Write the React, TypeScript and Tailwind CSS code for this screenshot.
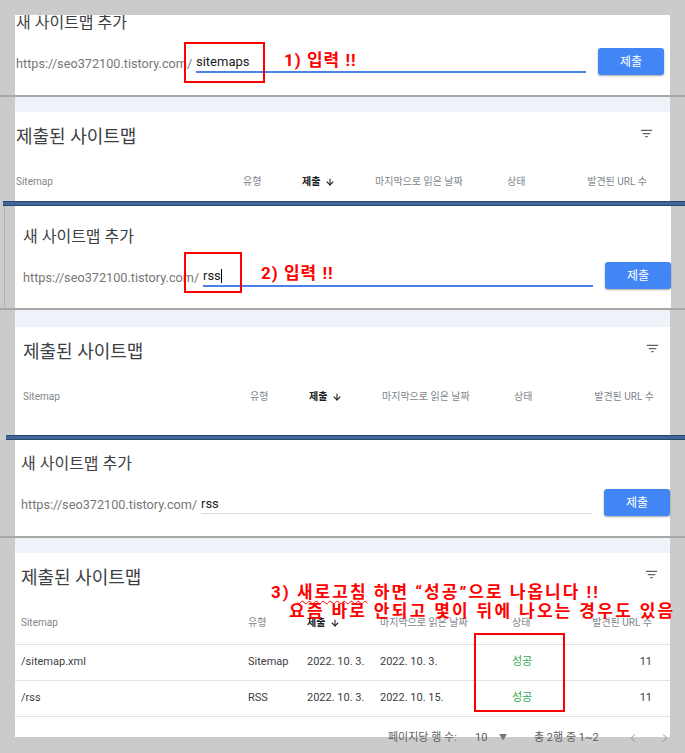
import { ArrowDown, ChevronLeft, ChevronRight } from 'lucide-react';

const PREFIX = 'https://seo372100.tistory.com/';

const rows = [
  { path: '/sitemap.xml', type: 'Sitemap', submitted: '2022. 10. 3.', read: '2022. 10. 3.', status: '성공', count: 11 },
  { path: '/rss', type: 'RSS', submitted: '2022. 10. 3.', read: '2022. 10. 15.', status: '성공', count: 11 },
];

function FilterIcon() {
  return (
    <svg width="15" height="15" viewBox="0 0 24 24" fill="#5f6368">
      <path d="M10 18h4v-2h-4v2zM3 6v2h18V6H3zm3 7h12v-2H6v2z" />
    </svg>
  );
}

function InputRow({ value, focused, caret }: { value: string; focused?: boolean; caret?: boolean }) {
  return (
    <div className="mt-[13px] flex h-[27px] items-center">
      <div className="flex h-[22px] flex-1 items-end">
        <span className="w-[180px] shrink-0 pb-[1px] text-[12.7px] leading-4 text-[#777]">{PREFIX}</span>
        <div
          className={`flex h-[22px] flex-1 items-end pb-[1px] ${
            focused ? 'border-b-2 border-[#4a80e8]' : 'border-b border-[#dadce0]'
          }`}
        >
          <span className="text-[13px] leading-4 text-[#202124]">{value}</span>
          {caret && <span className="mb-[1px] h-[14px] w-px bg-black" />}
        </div>
      </div>
      <button className="ml-[12px] h-[27px] w-[66px] rounded-[3px] bg-[#4285f4] text-[12px] text-white shadow-[0_1px_2px_rgba(0,0,0,0.35)]">
        제출
      </button>
    </div>
  );
}

function Gap({ h }: { h: string }) {
  return (
    <div className={`flex flex-col ${h}`}>
      <div className="h-[2px] bg-[#a8a8a8]" />
      <div className="ml-[15px] w-[655px] flex-1 bg-[#eef2f9]" />
    </div>
  );
}

function HeaderCells() {
  return (
    <>
      <div>Sitemap</div>
      <div>유형</div>
      <div className="flex items-center gap-[5px] font-bold text-[#202124]">
        제출 <ArrowDown size={10} strokeWidth={2.6} />
      </div>
      <div>마지막으로 읽은 날짜</div>
      <div>상태</div>
      <div className="text-right">발견된 URL 수</div>
    </>
  );
}

const gridCols = 'grid w-[631px] grid-cols-[227px_59px_73px_132px_1fr_auto] items-center';

function CardTitle({ mr }: { mr: string }) {
  return (
    <div className={`flex items-start justify-between pt-[12px] ${mr}`}>
      <div className="text-[18px] leading-[26px] text-[#3c4043]">제출된 사이트맵</div>
      <div className="mt-[2px]">
        <FilterIcon />
      </div>
    </div>
  );
}

function App() {
  return (
    <div className="relative h-[753px] w-[685px] overflow-hidden bg-[#cbcbcb] font-[Roboto,'Noto_Sans_CJK_KR',sans-serif]">
      <div className="h-[15px]" />

      {/* 1 */}
      <div className="ml-[15px] h-[80px] w-[655px] overflow-hidden bg-white pr-[6px] pl-[1px]">
        <div className="-mt-1 text-[16px] leading-6 text-[#3c4043]">새 사이트맵 추가</div>
        <InputRow value="sitemaps" focused />
      </div>
      <Gap h="h-[17px]" />
      <div className="ml-[15px] h-[89px] w-[655px] bg-white pl-[1px]">
        <CardTitle mr="mr-[16px]" />
        <div className={`${gridCols} mt-[25px] text-[10px] leading-[14px] text-[#80868b]`}>
          <HeaderCells />
        </div>
      </div>

      <div className="ml-[3px] h-[5px] border-y border-[#28466f] bg-[#41669a]" />

      {/* 2 */}
      <div className="flex h-[102px]">
        <div className="ml-[4px] w-[11px] border-l border-[#b3b3b3]" />
        <div className="w-[656px] bg-white pt-[19px] pl-[8px]">
          <div className="text-[16px] leading-6 text-[#3c4043]">새 사이트맵 추가</div>
          <InputRow value="rss" focused caret />
        </div>
      </div>
      <Gap h="h-[19px]" />
      <div className="ml-[15px] h-[108px] w-[655px] bg-white pl-[8px]">
        <CardTitle mr="mr-[10px]" />
        <div className={`${gridCols} mt-[25px] text-[10px] leading-[14px] text-[#80868b]`}>
          <HeaderCells />
        </div>
      </div>

      <div className="ml-[6px] h-[5px] border-y border-[#28466f] bg-[#41669a]" />

      {/* 3 */}
      <div className="ml-[15px] h-[96px] w-[655px] bg-white pt-[12px] pl-[6px]">
        <div className="text-[16px] leading-6 text-[#3c4043]">새 사이트맵 추가</div>
        <InputRow value="rss" />
      </div>
      <Gap h="h-[17px]" />
      <div className="ml-[15px] h-[184px] w-[655px] bg-white">
        <div className="pl-[6px]">
          <CardTitle mr="mr-[11px]" />
        </div>
        <div className="mt-[25px] border-b border-[#e3e3e3] pb-[14px] pl-[6px]">
          <div className={`${gridCols} text-[10px] leading-[14px] text-[#80868b]`}>
            <HeaderCells />
          </div>
        </div>
        {rows.map((r) => (
          <div key={r.path} className="flex h-[36px] items-center border-b border-[#e3e3e3] pl-[6px]">
            <div className={`${gridCols} text-[11px] text-[#3c4043]`}>
              <div>{r.path}</div>
              <div>{r.type}</div>
              <div>{r.submitted}</div>
              <div>{r.read}</div>
              <div className="text-[#34a853]">{r.status}</div>
              <div className="text-right">{r.count}</div>
            </div>
          </div>
        ))}
      </div>

      <div className="-mt-[7px] flex h-[16px] items-center text-[11px] text-[#5f5f5f]">
        <span className="ml-[388px] w-[87px]">페이지당 행 수:</span>
        <span className="w-[24px]">10</span>
        <span className="w-[35px] text-[8px] text-[#777]">▼</span>
        <span className="w-[92px]">총 2행 중 1~2</span>
        <span className="w-[32px]">
          <ChevronLeft size={14} strokeWidth={1.5} className="text-[#8a8a8a]" />
        </span>
        <span>
          <ChevronRight size={14} strokeWidth={1.5} className="text-[#8a8a8a]" />
        </span>
      </div>

      {/* annotations */}
      <div className="absolute top-[42px] left-[184px] h-[41px] w-[81px] border-2 border-[#f00]" />
      <div className="absolute top-[49px] left-[284px] text-[17px] leading-[22px] font-bold tracking-[1px] text-[#f00]">
        1) 입력 !!
      </div>
      <div className="absolute top-[252px] left-[184px] h-[41px] w-[58px] border-2 border-[#f00]" />
      <div className="absolute top-[262px] left-[261px] text-[17px] leading-[22px] font-bold tracking-[1px] text-[#f00]">
        2) 입력 !!
      </div>
      <div className="absolute top-[633px] left-[474px] h-[79px] w-[91px] border-2 border-[#f00]" />
      <div className="absolute top-[582px] left-[271px] text-[17px] leading-[21px] font-bold tracking-[2px] whitespace-nowrap text-[#f00]">
        3){' '}
        <span className="underline decoration-[#f00] decoration-wavy decoration-1 underline-offset-2">새로고침</span> 하면
        “성공”으로 나옵니다 !!
      </div>
      <div className="absolute top-[601px] left-[289px] text-[17px] leading-[21px] font-bold tracking-[2.3px] whitespace-nowrap text-[#f00]">
        요즘 바로 안되고 몇이 뒤에 나오는 경우도 있음
      </div>
    </div>
  );
}

export default App;
